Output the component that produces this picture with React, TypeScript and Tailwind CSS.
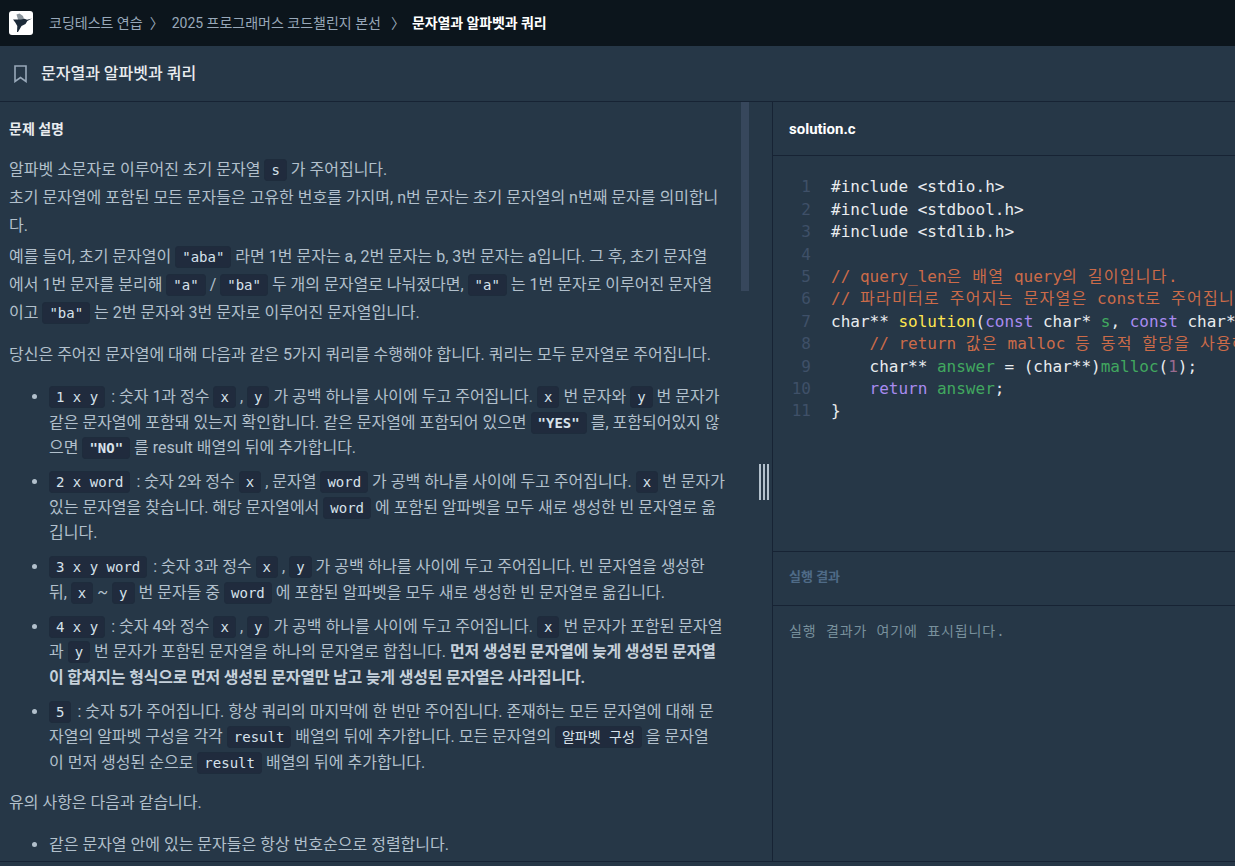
const FONT = "font-['Roboto','Noto_Sans_CJK_KR',sans-serif]";
const MONO = "font-['DejaVu_Sans_Mono','Noto_Sans_CJK_KR',monospace]";

function C({ children }: { children: React.ReactNode }) {
  return (
    <code className={`whitespace-pre rounded-[4px] border border-[#1e2c3c] bg-[#202b3d] px-[6px] py-[2px] ${MONO} text-[14px] leading-none text-[#d7e2eb]`}>
      {children}
    </code>
  );
}
function CB({ children }: { children: React.ReactNode }) {
  return (
    <code className={`whitespace-pre rounded-[4px] border border-[#1e2c3c] bg-[#202b3d] px-[6px] py-[2px] ${MONO} text-[14px] leading-none font-bold text-[#d7e2eb]`}>
      {children}
    </code>
  );
}
const Colon = () => <span className="ml-[2px]">:</span>;

function Logo() {
  return (
    <div className="flex h-[24px] w-[24px] items-center justify-center rounded-[3px] bg-white">
      <svg viewBox="0 0 24 24" className="h-[24px] w-[24px]">
        <path d="M7.5 3.5 10.5 2.5l3.5 2.5 1.5 4.5-6 .5z" fill="#8a949c" />
        <path d="M4 8.5 12 8.5 15.5 7.8 18 8.8 23 7.6 18.3 10 16.5 13 12.5 15 9 21 8 21 8.3 15 6.3 11.5z" fill="#1c2a38" />
      </svg>
    </div>
  );
}

const K = ({ c, children }: { c: string; children: React.ReactNode }) => <span style={{ color: c }}>{children}</span>;
const H = ({ children }: { children: React.ReactNode }) => <span className="tracking-[1.3px]">{children}</span>;

const COM = "#cc6b49";
const GRN = "#41a85f";
const PUR = "#a98bf0";

const codeLines: React.ReactNode[] = [
  <>#include &lt;stdio.h&gt;</>,
  <>#include &lt;stdbool.h&gt;</>,
  <>#include &lt;stdlib.h&gt;</>,
  <> </>,
  <K c={COM}>// query_len<H>은</H> <H>배열</H> query<H>의</H> <H>길이입니다</H>.</K>,
  <K c={COM}>// <H>파라미터로</H> <H>주어지는</H> <H>문자열은</H> const<H>로</H> <H>주어집니다</H>.</K>,
  <>char** <K c="#ffe54f">solution</K>(<K c={PUR}>const</K> char* <K c={GRN}>s</K>, <K c={PUR}>const</K> char* <K c={GRN}>query</K>[], size_t <K c={GRN}>query_len</K>) {"{"}</>,
  <>    <K c={COM}>// return <H>값은</H> malloc <H>등</H> <H>동적</H> <H>할당을</H> <H>사용해주세요</H>.</K></>,
  <>    char** <K c={GRN}>answer</K> = (char**)<K c={GRN}>malloc</K>(<K c="#9b6b8f">1</K>);</>,
  <>    <K c={PUR}>return</K> <K c={GRN}>answer</K>;</>,
  <>{"}"}</>,
];

const LI = "mb-[8.3px] leading-[25.6px]";

export default function App() {
  return (
    <div className={`flex h-[866px] w-[1235px] flex-col overflow-hidden bg-[#263747] ${FONT}`}>
      <header className="flex h-[46px] shrink-0 items-center bg-[#0c151c] pl-[9px] text-[14px]">
        <Logo />
        <span className="ml-[16px] text-[#98a8b9]">코딩테스트 연습</span>
        <span className="ml-[7px] mr-[8px] text-[#98a8b9]">〉</span>
        <span className="text-[#98a8b9]">2025 프로그래머스 코드챌린지 본선</span>
        <span className="ml-[10px] mr-[7px] text-[#98a8b9]">〉</span>
        <span className="font-bold tracking-[-0.1px] text-white">문자열과 알파벳과 쿼리</span>
      </header>
      <div className="flex h-[56px] shrink-0 items-center border-b border-[#172334] pl-[13px]">
        <svg viewBox="0 0 14 18" className="h-[18px] w-[15px]" fill="none" stroke="#98a8b9" strokeWidth="1.6">
          <path d="M1.5 1h11v15.5L7 12.5l-5.5 4z" />
        </svg>
        <span className="ml-[13px] text-[16px] font-medium text-[#e9ecef]">문자열과 알파벳과 쿼리</span>
      </div>
      <div className="mb-[4px] flex min-h-0 flex-1 border-b border-[#172334]">
        <div className="relative w-[749px] shrink-0 overflow-hidden">
          <div className="h-full w-[735px] pl-[9px] text-[16px] text-[#b2c0cc]">
            <h6 className="mt-[13px] mb-[13px] text-[14px] leading-[28px] font-bold text-[#e9ecef]">문제 설명</h6>
            <div className="mb-[14px] leading-[28px]">
              <p>
                알파벳 소문자로 이루어진 초기 문자열 <C>s</C> 가 주어집니다.<br />
                초기 문자열에 포함된 모든 문자들은 고유한 번호를 가지며, n번 문자는 초기 문자열의 n번째 문자를 의미합니<br />다.
              </p>
              <p className="pt-[3px]">
                예를 들어, 초기 문자열이 <C>"aba"</C> 라면 1번 문자는 a, 2번 문자는 b, 3번 문자는 a입니다. 그 후, 초기 문자열<br />
                에서 1번 문자를 분리해 <C>"a"</C> / <C>"ba"</C> 두 개의 문자열로 나눠졌다면, <C>"a"</C> 는 1번 문자로 이루어진 문자열<br />
                이고 <C>"ba"</C> 는 2번 문자와 3번 문자로 이루어진 문자열입니다.
              </p>
            </div>
            <p className="mb-[15px] leading-[28px]">당신은 주어진 문자열에 대해 다음과 같은 5가지 쿼리를 수행해야 합니다. 쿼리는 모두 문자열로 주어집니다.</p>
            <ul className="mb-[13px] list-disc pl-[40px]">
              <li className={LI}><C>1 x y</C> <Colon /> 숫자 1과 정수 <C>x</C> , <C>y</C> 가 공백 하나를 사이에 두고 주어집니다. <C>x</C> 번 문자와 <C>y</C> 번 문자가<br />같은 문자열에 포함돼 있는지 확인합니다. 같은 문자열에 포함되어 있으면 <CB>"YES"</CB> 를, 포함되어있지 않<br />으면 <CB>"NO"</CB> 를 result 배열의 뒤에 추가합니다.</li>
              <li className={LI}><C>2 x word</C> <Colon /> 숫자 2와 정수 <C>x</C> , 문자열 <C>word</C> 가 공백 하나를 사이에 두고 주어집니다. <C>x</C> 번 문자가<br />있는 문자열을 찾습니다. 해당 문자열에서 <C>word</C> 에 포함된 알파벳을 모두 새로 생성한 빈 문자열로 옮<br />깁니다.</li>
              <li className={LI}><C>3 x y word</C> <Colon /> 숫자 3과 정수 <C>x</C> , <C>y</C> 가 공백 하나를 사이에 두고 주어집니다. 빈 문자열을 생성한<br />뒤, <C>x</C> ~ <C>y</C> 번 문자들 중 <C>word</C> 에 포함된 알파벳을 모두 새로 생성한 빈 문자열로 옮깁니다.</li>
              <li className={LI}><C>4 x y</C> <Colon /> 숫자 4와 정수 <C>x</C> , <C>y</C> 가 공백 하나를 사이에 두고 주어집니다. <C>x</C> 번 문자가 포함된 문자열<br />과 <C>y</C> 번 문자가 포함된 문자열을 하나의 문자열로 합칩니다. <strong className="tracking-[-0.2px] text-[#c5d0da]">먼저 생성된 문자열에 늦게 생성된 문자열<br />이 합쳐지는 형식으로 먼저 생성된 문자열만 남고 늦게 생성된 문자열은 사라집니다.</strong></li>
              <li className={LI}><C>5</C> <Colon /> 숫자 5가 주어집니다. 항상 쿼리의 마지막에 한 번만 주어집니다. 존재하는 모든 문자열에 대해 문<br />자열의 알파벳 구성을 각각 <C>result</C> 배열의 뒤에 추가합니다. 모든 문자열의 <C>알파벳 구성</C> 을 문자열<br />이 먼저 생성된 순으로 <C>result</C> 배열의 뒤에 추가합니다.</li>
            </ul>
            <p className="mb-[15px] leading-[28px]">유의 사항은 다음과 같습니다.</p>
            <ul className="list-disc pl-[40px]">
              <li className="leading-[25.6px]">같은 문자열 안에 있는 문자들은 항상 번호순으로 정렬합니다.</li>
            </ul>
          </div>
          <div className="absolute right-0 top-0 h-[189px] w-[8px] bg-[#37475c]" />
        </div>
        <div className="relative w-[23px] shrink-0">
          <div className="absolute left-[10px] top-[362px] flex h-[36px] gap-[2px]">
            <div className="w-[2px] bg-[#b2c0cc]" />
            <div className="w-[2px] bg-[#b2c0cc]" />
            <div className="w-[2px] bg-[#b2c0cc]" />
          </div>
        </div>
        <div className="flex min-w-0 flex-1 flex-col border-l border-[#172334]">
          <div className="flex h-[54px] shrink-0 items-center border-b border-[#172334] pt-[1px] pl-[16px] text-[15px] font-bold text-white">solution.c</div>
          <div className={`flex h-[396px] shrink-0 overflow-hidden border-b border-[#172334] pt-[20.4px] ${MONO} text-[16px] leading-[22.4px]`}>
            <div className="w-[38px] shrink-0 text-right text-[#3f5068]">
              {codeLines.map((_, i) => <div key={i}>{i + 1}</div>)}
            </div>
            <div className="ml-[20px] whitespace-pre text-[#e9ecef]">
              {codeLines.map((l, i) => <div key={i}>{l}</div>)}
            </div>
          </div>
          <div className="flex h-[54px] shrink-0 items-center border-b border-[#172334] pb-[4px] pl-[16px] text-[13px] font-bold text-[#4f6b87]">실행 결과</div>
          <div className={`pl-[16px] pt-[15px] ${MONO} text-[14px] tracking-[0.9px] text-[#78909c]`}>실행 결과가 여기에 표시됩니다.</div>
        </div>
      </div>
    </div>
  );
}
